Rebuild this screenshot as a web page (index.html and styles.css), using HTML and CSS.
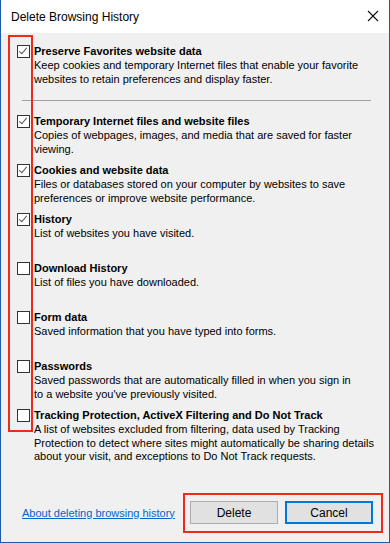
FILE: index.html
```html
<!DOCTYPE html>
<html lang="en">
<head>
    <meta charset="UTF-8">
    <meta name="viewport" content="width=device-width, initial-scale=1.0">
    <title>Delete Browsing History</title>
    <link rel="stylesheet" href="styles.css">
</head>
<body>
  <div class="window">
    <!-- Title bar -->
    <div class="titlebar">
        <span class="title">Delete Browsing History</span>
        <svg class="close" width="12" height="12" viewBox="0 0 12 12">
            <path d="M1 1 L11 11 M11 1 L1 11" stroke="#111" stroke-width="1.1" fill="none"/>
        </svg>
    </div>

    <div class="content">
        <div class="option first">
            <span class="box checked"></span>
            <div class="text">
                <div class="name">Preserve Favorites website data</div>
                <div class="desc">Keep cookies and temporary Internet files that enable your favorite<br>websites to retain preferences and display faster.</div>
            </div>
        </div>

        <hr class="divider">

        <div class="option">
            <span class="box checked"></span>
            <div class="text">
                <div class="name">Temporary Internet files and website files</div>
                <div class="desc">Copies of webpages, images, and media that are saved for faster<br>viewing.</div>
            </div>
        </div>
        <div class="option">
            <span class="box checked"></span>
            <div class="text">
                <div class="name">Cookies and website data</div>
                <div class="desc">Files or databases stored on your computer by websites to save<br>preferences or improve website performance.</div>
            </div>
        </div>
        <div class="option">
            <span class="box checked"></span>
            <div class="text">
                <div class="name">History</div>
                <div class="desc">List of websites you have visited.</div>
            </div>
        </div>
        <div class="option">
            <span class="box"></span>
            <div class="text">
                <div class="name">Download History</div>
                <div class="desc">List of files you have downloaded.</div>
            </div>
        </div>
        <div class="option">
            <span class="box"></span>
            <div class="text">
                <div class="name">Form data</div>
                <div class="desc">Saved information that you have typed into forms.</div>
            </div>
        </div>
        <div class="option">
            <span class="box"></span>
            <div class="text">
                <div class="name">Passwords</div>
                <div class="desc">Saved passwords that are automatically filled in when you sign in<br>to a website you've previously visited.</div>
            </div>
        </div>
        <div class="option">
            <span class="box"></span>
            <div class="text">
                <div class="name">Tracking Protection, ActiveX Filtering and Do Not Track</div>
                <div class="desc">A list of websites excluded from filtering, data used by Tracking<br>Protection to detect where sites might automatically be sharing details<br>about your visit, and exceptions to Do Not Track requests.</div>
            </div>
        </div>

        <!-- red annotation round the checkboxes -->
        <span class="mark mark-boxes"></span>
    </div>

    <div class="footer">
        <a class="help" href="#">About deleting browsing history</a>
        <div class="actions">
            <button class="btn">Delete</button>
            <button class="btn default">Cancel</button>
            <span class="mark mark-buttons"></span>
        </div>
    </div>
  </div>
</body>
</html>
```

FILE: styles.css
```css
body {
    margin: 0;
    font-family: "Liberation Sans", Arial, sans-serif;
    font-size: 11px;
    color: #000;
}
.window {
    width: 390px;
    height: 543px;
    box-sizing: border-box;
    border: 1px solid #1d5ba6;
    border-top: none;
    background: #f0f0f0;
    display: flex;
    flex-direction: column;
    overflow: hidden;
}
.titlebar {
    height: 33px;
    background: #fff;
    display: flex;
    align-items: center;
    justify-content: space-between;
    padding: 0 10px 0 10px;
    flex-shrink: 0;
    font-size: 12px;
}
.close {
    margin-top: -1px;
}
.content {
    position: relative;
    padding: 10px 16px 0 16px;
}
.option {
    display: flex;
    height: 49px;
}
.box {
    width: 13px;
    height: 13px;
    box-sizing: border-box;
    border: 1px solid #333;
    background: #fff;
    margin-top: 2px;
    flex-shrink: 0;
    position: relative;
}
.box.checked::after {
    content: "";
    position: absolute;
    left: 3px;
    top: 0px;
    width: 3px;
    height: 7px;
    border: solid #555;
    border-width: 0 1px 1px 0;
    transform: rotate(40deg);
}
.text {
    padding-left: 4px;
}
.name {
    font-weight: bold;
    line-height: 16px;
}
.desc {
    line-height: 13.5px;
    white-space: nowrap;
}
.divider {
    border: none;
    border-top: 1px solid #a0a0a0;
    margin: 8px 2px 12px 5px;
}
.mark {
    position: absolute;
    border: 2px solid #ee2a1c;
    box-sizing: border-box;
}
.mark-boxes {
    left: 7px;
    top: 2px;
    width: 25px;
    height: 397px;
}
.footer {
    margin-top: auto;
    display: flex;
    align-items: center;
    justify-content: space-between;
    padding: 0 16px 18px 21px;
}
.help {
    color: #0066cc;
    white-space: nowrap;
}
.actions {
    position: relative;
    display: flex;
    gap: 7px;
}
.btn {
    width: 88px;
    height: 23px;
    font: inherit;
    font-size: 12px;
    color: #000;
    background: #e1e1e1;
    border: 1px solid #adadad;
    padding: 0;
}
.btn.default {
    border: 2px solid #0078d7;
}
.mark-buttons {
    left: -7px;
    right: -10px;
    top: -8px;
    bottom: -9px;
}
```
